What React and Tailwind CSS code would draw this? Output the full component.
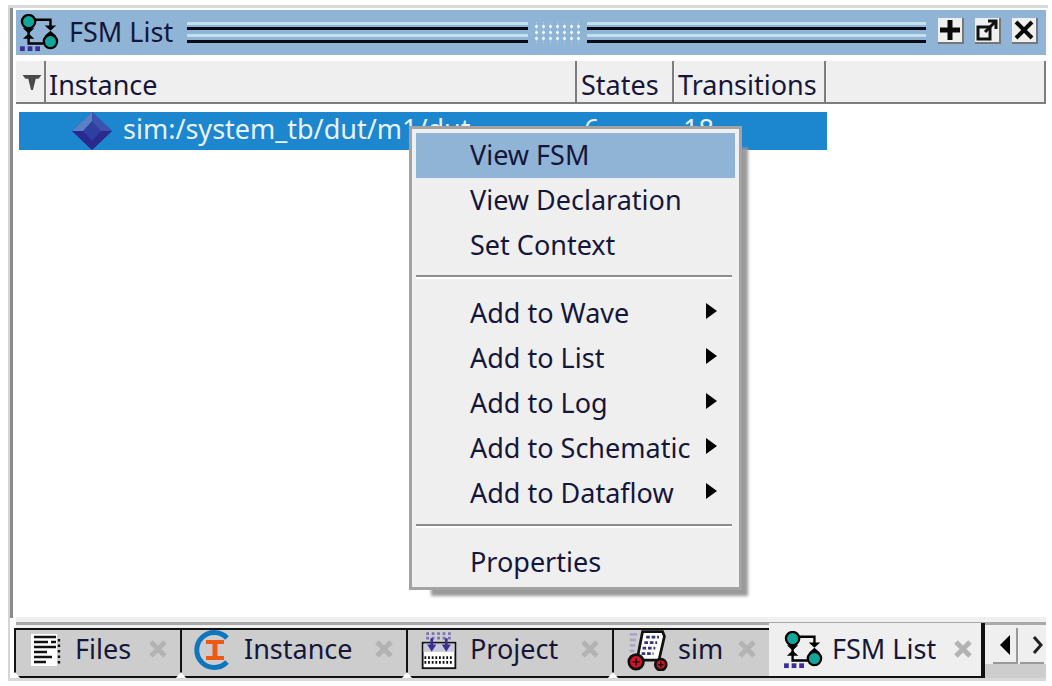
const FONT = "font-['Noto_Sans','Liberation_Sans',sans-serif]";

function FsmIcon({ className }) {
  return (
    <svg viewBox="0 0 44 40" className={className}>
      <path d="M12 6H33V14M15 31H26M10 14V31H16" fill="none" stroke="#000" strokeWidth="2.5" />
      <path d="M4 15h12l-6 5.5zM4 26h12l-6-5.5z" fill="#000" />
      <path d="M27 12h12l-6 5.5zM27 23h12l-6-5.5z" fill="#000" />
      <circle cx="10" cy="8" r="7" fill="#12a69a" stroke="#000" strokeWidth="2.4" />
      <circle cx="33" cy="29" r="7" fill="#12a69a" stroke="#000" strokeWidth="2.4" />
      <rect x="1" y="34" width="5" height="5" fill="#3b2f96" />
      <rect x="9" y="34" width="5" height="5" fill="#3b2f96" />
      <rect x="17" y="34" width="5" height="5" fill="#3b2f96" />
    </svg>
  );
}

function Grip({ className }) {
  return (
    <div className={`flex flex-col ${className}`}>
      <div className="h-[3px] bg-[#c3e0ee]" />
      <div className="h-[3px] mt-[2px] bg-[#0a0a14]" />
      <div className="h-[3px] mt-[4px] bg-[#c3e0ee]" />
      <div className="h-[3px] mt-[3px] bg-[#0a0a14]" />
    </div>
  );
}

function WinButton({ children }) {
  return (
    <div className="w-[26px] h-[26px] bg-[#efefef] border-r-2 border-b-2 border-[#777] flex items-center justify-center">
      {children}
    </div>
  );
}

function Close() {
  return (
    <svg viewBox="0 0 22 22" className="w-[22px] h-[22px]">
      <path d="M3 3L19 19M19 3L3 19" stroke="#0a0a0a" strokeWidth="4" />
    </svg>
  );
}

function HeaderCell({ className, children }) {
  return (
    <div className={`h-full bg-[#efefef] border-r-2 border-b-2 border-[#7d7d7d] flex items-center pl-[3px] pt-[8px] ${className}`}>
      {children}
    </div>
  );
}

function MenuItem({ label, sub, active }) {
  return (
    <div className={`h-[45px] flex items-center justify-between pl-[54px] pr-[18px] text-[27px] text-[#16163a] ${active ? "bg-[#8fb4d6]" : ""}`}>
      <span className="whitespace-nowrap">{label}</span>
      {sub && <span className="w-0 h-0 border-y-[8px] border-y-transparent border-l-[11px] border-l-black -translate-y-[3px]" />}
    </div>
  );
}

function Sep({ top }) {
  return (
    <div className={`mr-[3px] mb-[12px] ${top}`}>
      <div className="h-[2px] bg-[#8d8d8d]" />
      <div className="h-[2px] bg-white" />
    </div>
  );
}

function Tab({ className, icon, label, active, iconBox }) {
  return (
    <div className={`relative flex items-center border-b-2 border-[#111] ${active ? "bg-[#efefef] h-[55px] -mt-[5px] border-r-4" : "bg-[#cdcdcd] h-[50px] border-t-2 border-l-2 pb-[7px]"} ${className}`}>
      <div className={`shrink-0 flex items-center justify-center ${iconBox}`}>{icon}</div>
      <span className="text-[27px] text-[#16163a] whitespace-nowrap">{label}</span>
      <svg viewBox="0 0 22 22" className={`absolute w-[22px] h-[22px] ${active ? "right-[7px] top-[15px]" : "right-[11px] top-[8px]"}`}>
        <path d="M4 4L18 18M18 4L4 18" stroke="#b3b3b3" strokeWidth="5" />
      </svg>
      {!active && <span className="absolute -left-[6px] -bottom-[2px] w-0 h-0 border-x-[5px] border-x-transparent border-b-[6px] border-b-white" />}
    </div>
  );
}

function FilesIcon() {
  return (
    <svg viewBox="0 0 32 34" className="w-[32px] h-[34px]">
      <rect x="0" y="1" width="26" height="32" fill="#fff" />
      <path d="M3 4h22M3 9h14M20 9h5M3 14h22M3 19h13M3 24h18M3 29h12" stroke="#111" strokeWidth="2.4" />
      <path d="M28 6v26" stroke="#111" strokeWidth="2.4" strokeDasharray="2.5 3" />
    </svg>
  );
}

function InstanceIcon() {
  return (
    <svg viewBox="0 0 42 42" className="w-[42px] h-[42px]">
      <path d="M35 9A17.5 17.5 0 1 0 35 33" fill="none" stroke="#0e76bd" strokeWidth="5" />
      <path d="M14 11h18v4h-6.5v12H32v4H14v-4h6.5V15H14z" fill="#ee5a14" />
    </svg>
  );
}

function ProjectIcon() {
  return (
    <svg viewBox="0 0 40 44" className="w-[38px] h-[40px]">
      <rect x="2" y="14" width="36" height="28" fill="#fff" stroke="#111" strokeWidth="2" />
      <rect x="3" y="15" width="34" height="9" fill="#c9c9d9" />
      <path d="M5 29v10M9 29v10M13 29v10M17 29v10M21 29v10M25 29v10M29 29v10M33 29v10" stroke="#111" strokeWidth="2" strokeDasharray="3 2" />
      <path d="M6 4h28M6 9h28" stroke="#7a70bb" strokeWidth="3" strokeDasharray="3 3" />
      <path d="M7 16h10l-5 8zM23 16h10l-5 8z" fill="#3b2f96" />
      <path d="M12 9v8M28 9v8" stroke="#3b2f96" strokeWidth="3" />
    </svg>
  );
}

function SimIcon() {
  return (
    <svg viewBox="0 0 44 46" className="w-[44px] h-[42px]">
      <path d="M2 6h8M2 12h7M2 18h6M2 24h5M2 30h4" stroke="#a9a6c9" strokeWidth="3" />
      <path d="M16 3H38L40 8L34 34H10Z" fill="#fff" stroke="#111" strokeWidth="3" />
      <path d="M20 9h14M18 15h14M16 21h14M15 27h13" stroke="#35357a" strokeWidth="3" strokeDasharray="4 2" />
      <circle cx="9" cy="36" r="8" fill="#d81127" stroke="#111" strokeWidth="3" />
      <circle cx="36" cy="39" r="6" fill="#d81127" stroke="#111" strokeWidth="3" />
      <path d="M9 32v8M5 36h8M36 36v6M33 39h6" stroke="#111" strokeWidth="1.6" />
    </svg>
  );
}

export default function App() {
  return (
    <div className={`relative w-[1052px] h-[686px] bg-white overflow-hidden pt-[5px] pl-[8px] pr-[6px] ${FONT}`}>
      <div className="h-[3px] bg-[#d9d9d9] -mr-[2px]" />
      <div className="flex h-[673px]">
        <div className="w-[2px] bg-[#d5d5d5]" />
        <div className="w-[3px] bg-[#8b8b8b] mr-[3px] h-[610px]" />
        <div className="flex-1 min-w-0 flex flex-col">
          {/* title bar */}
          <div className="h-[45px] mt-[2px] bg-[#8fb4d5] flex items-center pl-[3px]">
            <FsmIcon className="w-[42px] h-[38px] shrink-0" />
            <span className="ml-[8px] text-[27px] text-[#16163a] whitespace-nowrap w-[118px]">FSM List</span>
            <Grip className="w-[341px]" />
            <div className="w-[59px] h-[21px] px-[6px] bg-clip-content bg-center bg-[length:7px_6px] bg-[radial-gradient(circle,#f2f9fc_1.4px,transparent_1.8px)]" />
            <Grip className="w-[339px]" />
            <div className="ml-[12px] -mt-[3px] flex gap-[11px]">
              <WinButton>
                <svg viewBox="0 0 22 22" className="w-[22px] h-[22px]"><path d="M11 1V21M1 11H21" stroke="#0a0a0a" strokeWidth="5" /></svg>
              </WinButton>
              <WinButton>
                <svg viewBox="0 0 22 22" className="w-[22px] h-[22px]">
                  <rect x="2" y="8" width="12" height="12" fill="none" stroke="#111" strokeWidth="3" />
                  <path d="M9 13L19 3M12 2H20V10" fill="none" stroke="#111" strokeWidth="3" />
                </svg>
              </WinButton>
              <WinButton><Close /></WinButton>
            </div>
          </div>
          {/* column header */}
          <div className="h-[43px] mt-[6px] flex text-[27px] text-[#16163a]">
            <HeaderCell className="w-[30px] justify-center !pl-[4px] !pt-[2px]">
              <svg viewBox="0 0 20 18" className="w-[20px] h-[17px]">
                <path d="M0 1H20L17 5H14L11 17H9L6 5H3Z" fill="#4a4a4a" />
              </svg>
            </HeaderCell>
            <HeaderCell className="w-[531px]">Instance</HeaderCell>
            <HeaderCell className="w-[97px] !pl-[4px]">States</HeaderCell>
            <HeaderCell className="w-[152px] !pl-[4px]">Transitions</HeaderCell>
            <HeaderCell className="flex-1" />
          </div>
          {/* list */}
          <div className="h-[513px] bg-white pt-[8px]">
            <div className="w-[808px] h-[38px] ml-[3px] pb-[4px] bg-[#1c86cf] text-[#e9f2fa] text-[27px] flex items-center">
              <svg viewBox="0 0 40 38" className="ml-[53px] w-[40px] h-[38px] mt-[4px] shrink-0">
                <path d="M20 0L40 19L20 38L0 19Z" fill="#2f3f9f" />
                <path d="M20 0L0 19H11L20 9Z" fill="#5a80c8" />
                <path d="M20 0L40 19H29L20 9Z" fill="#3c52ad" />
                <path d="M0 19L20 38L40 19H29L20 29L11 19Z" fill="#2a2a8e" />
              </svg>
              <span className="ml-[11px] w-[461px] whitespace-nowrap overflow-hidden shrink-0">sim:/system_tb/dut/m1/dut</span>
              <span className="w-[99px]">6</span>
              <span>18</span>
            </div>
          </div>
          <div className="h-[5px] bg-[#f0f0f0]" />
          <div className="h-[3px] bg-[#a9a9a9]" />
          <div className="h-[3px] bg-[#f0f0f0]" />
          {/* tabs */}
          <div className="flex h-[50px] -ml-[2px] items-start">
            <Tab className="w-[166px]" icon={<FilesIcon />} label="Files" iconBox="w-[59px] pl-[3px]" />
            <Tab className="w-[226px]" icon={<InstanceIcon />} label="Instance" iconBox="w-[62px]" />
            <Tab className="w-[206px]" icon={<ProjectIcon />} label="Project" iconBox="w-[62px]" />
            <Tab className="w-[157px]" icon={<SimIcon />} label="sim" iconBox="w-[64px] pl-[3px]" />
            <Tab className="w-[216px]" icon={<FsmIcon className="w-[42px] h-[38px]" />} label="FSM List" iconBox="w-[63px] pl-[6px]" active />
            <div className="flex-1 h-[50px] bg-[linear-gradient(#f0f0f0_36px,#cdcdcd_36px)] flex gap-[2px] pl-[8px]">
              <div className="w-[25px] h-[36px] bg-[#efefef] border-r-2 border-b-2 border-[#999] flex items-center justify-center">
                <span className="w-0 h-0 border-y-[10px] border-y-transparent border-r-[10px] border-r-black" />
              </div>
              <div className="w-[24px] h-[36px] bg-[#efefef] border-b-2 border-[#999] flex items-center justify-end">
                <svg viewBox="0 0 12 20" className="w-[12px] h-[20px]">
                  <path d="M2 2L9 10L2 18" fill="none" stroke="#222" strokeWidth="3" />
                </svg>
              </div>
            </div>
          </div>
          <div className="h-[3px] -ml-[8px] bg-[#d9d9d9]" />
        </div>
      </div>

      {/* context menu */}
      <div className="absolute left-[409px] top-[126px] w-[333px] h-[464px] bg-[#efefef] border-[3px] border-[#a3a3a3] shadow-[14px_14px_3px_-8px_#9a9a9a] pt-[4px] pl-[4px] pr-[4px]">
        <MenuItem label="View FSM" active />
        <MenuItem label="View Declaration" />
        <MenuItem label="Set Context" />
        <Sep top="mt-[7px]" />
        <MenuItem label="Add to Wave" sub />
        <MenuItem label="Add to List" sub />
        <MenuItem label="Add to Log" sub />
        <MenuItem label="Add to Schematic" sub />
        <MenuItem label="Add to Dataflow" sub />
        <Sep top="mt-[8px]" />
        <MenuItem label="Properties" />
      </div>
    </div>
  );
}
